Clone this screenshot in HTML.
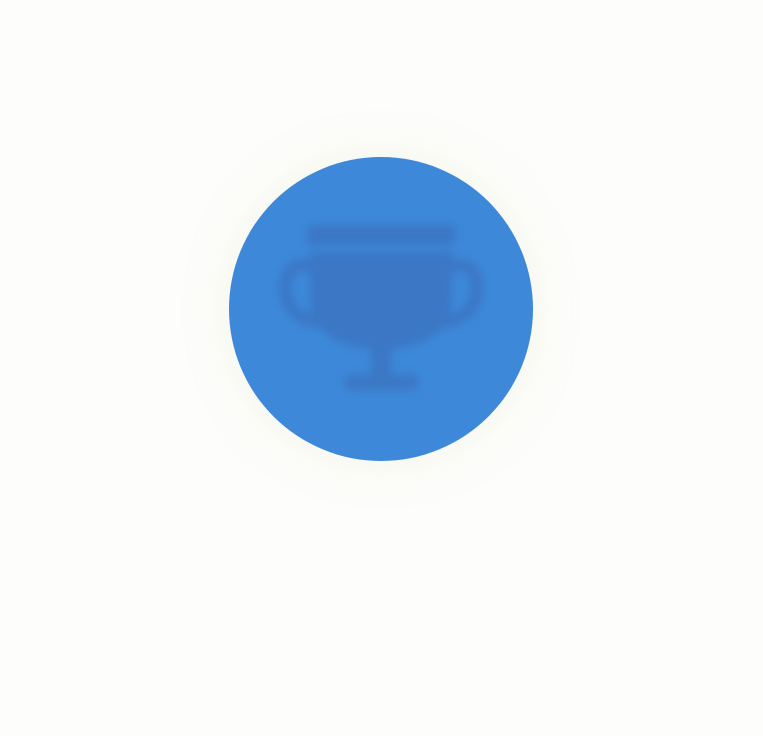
<!DOCTYPE html>
<html><head><style>
html,body{margin:0;padding:0;width:763px;height:736px;background:#fdfdfb;overflow:hidden}
.c{position:absolute;left:229px;top:157px;width:304px;height:304px;border-radius:50%;background:#3d88d9;box-shadow:0 0 40px rgba(240,240,220,0.5)}
svg{position:absolute;left:0;top:0}
</style></head><body>
<div class="c"></div>
<svg width="763" height="736" viewBox="0 0 763 736">
<defs><filter id="b"><feGaussianBlur stdDeviation="4.5"/></filter></defs>
<g filter="url(#b)" fill="#3a77c4" stroke="none">
<rect x="307" y="225" width="148" height="20" rx="3"/>
<path d="M310 252 H452 V300 Q452 345 381 350 Q310 345 310 300 Z"/>
<path d="M312 265 H300 Q285 268 285 290 Q288 318 318 322" fill="none" stroke="#3a77c4" stroke-width="12"/>
<path d="M450 265 H462 Q477 268 477 290 Q474 318 444 322" fill="none" stroke="#3a77c4" stroke-width="12"/>
<path d="M370 345 H392 L390 378 H372 Z"/>
<rect x="345" y="375" width="73" height="15" rx="3"/>
</g>
</svg>
</body></html>
